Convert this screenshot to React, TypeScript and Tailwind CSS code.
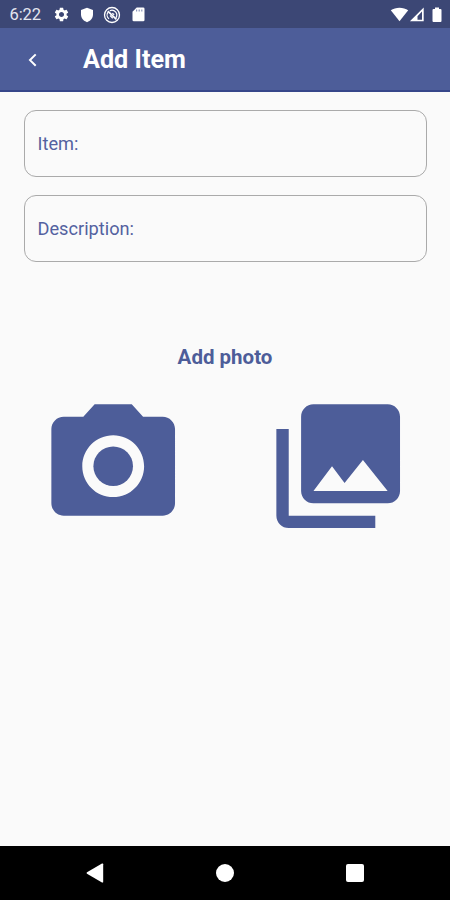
import type { ReactNode } from "react";
import { MdCameraAlt, MdPhotoLibrary, MdSettings } from "react-icons/md";

function StatusBar() {
  return (
    <div className="flex h-7 shrink-0 items-center bg-[#3c4775] pt-px text-white">
      <span className="ml-[9.500px] w-[43.500px] pt-0.5 text-[16.500px] leading-none tracking-[-0.1px] text-[#e4e6f0]">6:22</span>
      <MdSettings size={17} />
      <svg className="ml-[10px]" width="14" height="16" viewBox="0 0 14 16" fill="currentColor">
        <path d="M7 .8 1 3v4.6C1 11.300 3.500 14 7 15.200 10.500 14 13 11.300 13 7.600V3z" />
      </svg>
      <svg className="ml-[9px]" width="18" height="18" viewBox="0 0 18 18" fill="none" stroke="currentColor">
        <circle cx="9" cy="9" r="7.500" strokeWidth="1.300" />
        <path d="M6 12.900A4.900 4.900 0 0 1 5 6.200M6.800 4.700A4.900 4.900 0 0 1 12.900 11.900" strokeWidth="1.200" />
        <path d="M4.800 5.200 13.400 13.400" strokeWidth="1.700" />
        <path d="M7 9.500 9.800 12.200M9.300 7.300 11.200 8.800" strokeWidth="1.200" />
      </svg>
      <svg className="ml-[11px]" width="13" height="15" viewBox="0 0 13 15" fill="currentColor">
        <path d="M4.700.5H11.200q1.300 0 1.300 1.300V13q0 1.300-1.300 1.300H1.800Q.5 14.300.5 13V4.700z" />
        <path d="M4.600 2.600v2M7.200 2.600v2M9.800 2.600v2" stroke="#8d96ba" strokeWidth="1.200" />
      </svg>
      <div className="ml-auto flex items-center pr-2">
        <svg width="19" height="15" viewBox="0 0 19 15" fill="currentColor">
          <path d="M9.500 14.300.8 3.300C5.500-.1 13.500-.1 18.200 3.300z" />
        </svg>
        <svg width="15" height="15" viewBox="0 0 15 15" fill="currentColor">
          <path fillRule="evenodd" d="M14.700.5V14.300H.9zM13 4.600 8.500 9.300v3.500H13z" />
        </svg>
        <svg className="ml-[8px]" width="10" height="16" viewBox="0 0 10 16" fill="currentColor">
          <path d="M3 .6h4V2h1.500q1 0 1 1v11q0 1-1 1h-7q-1 0-1-1V3q0-1 1-1H3z" />
        </svg>
      </div>
    </div>
  );
}

function AppBar({ title }: { title: string }) {
  return (
    <header className="flex h-16 shrink-0 items-center border-b-2 border-[#36478a] bg-[#4d5d99] text-white">
      <button className="ml-[27px] flex w-14 items-center pt-0.5" aria-label="Back">
        <svg width="11" height="16" viewBox="0 0 11 16" fill="none" stroke="currentColor" strokeWidth="2">
          <path d="M8.700 2.400 3 8.100 8.700 13.800" />
        </svg>
      </button>
      <h1 className="pt-0.5 text-[25.2px] leading-none font-bold">{title}</h1>
    </header>
  );
}

function Field({ label }: { label: string }) {
  return (
    <label className="flex h-[67px] items-center rounded-[12px] border border-[#aaaaaa] px-[13px] text-[18.200px] text-[#5361a0]">
      {label}
    </label>
  );
}

function PhotoButton({ label, children }: { label: string; children: ReactNode }) {
  return (
    <button className="flex justify-center" aria-label={label}>
      {children}
    </button>
  );
}

function NavBar() {
  return (
    <nav className="grid h-[54px] shrink-0 grid-cols-[130px_130px_130px] place-items-center bg-black px-[30px] text-white">
      <svg width="18" height="20" viewBox="0 0 18 20" fill="currentColor">
        <path d="M16 .6Q17.200 0 17.200 1.300V18.700Q17.200 20 16 19.400L1 10.700Q0 10 1 9.300z" />
      </svg>
      <span className="size-[18px] rounded-full bg-white" />
      <span className="size-[18px] rounded-[2px] bg-white" />
    </nav>
  );
}

export default function App() {
  return (
    <div className="flex h-screen flex-col bg-[#fafafa] font-['Roboto',sans-serif]">
      <StatusBar />
      <AppBar title="Add Item" />
      <main className="flex-1">
        <div className="flex flex-col gap-[18px] pt-[18px] pr-[23px] pl-[23.500px]">
          <Field label="Item:" />
          <Field label="Description:" />
        </div>
        <h2 className="mt-[80px] text-center text-[20.500px] leading-[30px] font-bold text-[#4d5d99]">Add photo</h2>
        <div className="mt-[19.500px] grid grid-cols-2 pl-px text-[#4d5d99]">
          <PhotoButton label="Take photo">
            <MdCameraAlt size={148.4} />
          </PhotoButton>
          <PhotoButton label="Choose from gallery">
            <MdPhotoLibrary size={148.4} />
          </PhotoButton>
        </div>
      </main>
      <NavBar />
    </div>
  );
}
